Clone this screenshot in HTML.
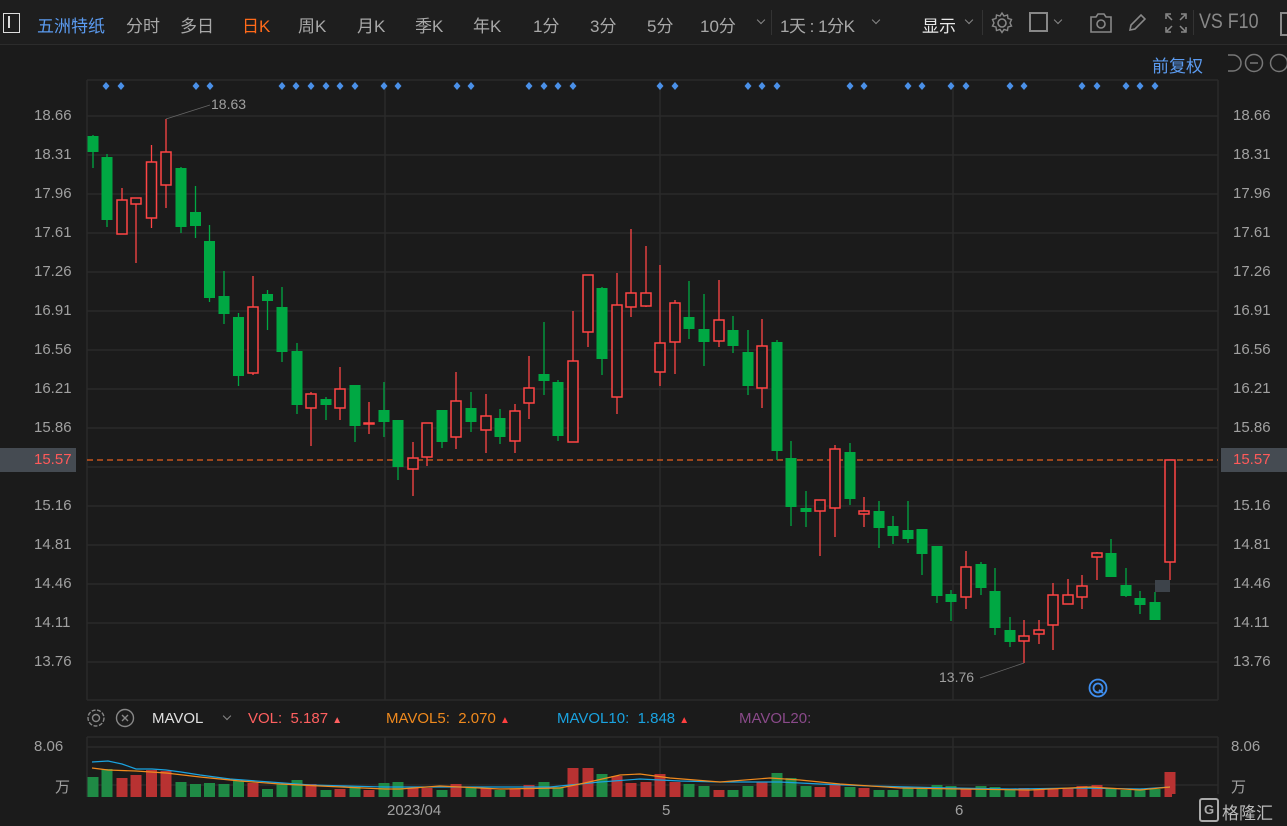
<!DOCTYPE html>
<html><head><meta charset="utf-8"><style>
body{margin:0;width:1287px;height:826px;background:#1b1b1b;overflow:hidden;font-family:"Liberation Sans","Noto Sans CJK SC",sans-serif;position:relative}
.tb{position:absolute;left:0;top:0;width:1287px;height:44px;background:#1e1e1e;border-bottom:1px solid #2c2c2c}
.tb span{position:absolute;top:12px;font-size:17px;color:#a8a8a8}
.tb i{position:absolute;top:17px;width:5px;height:5px;border-right:1.3px solid #888;border-bottom:1.3px solid #888;transform:rotate(45deg)}
.t{position:absolute;font-size:15px;color:#a0a0a0}
</style></head><body>
<div style="position:absolute;left:0;top:0;width:1287px;height:4px;background:#111"></div>
<div class="tb">
<div style="position:absolute;left:3px;top:13px;width:15px;height:18px;border:1px solid #ddd"></div><div style="position:absolute;left:8px;top:16px;width:2px;height:12px;background:#ddd"></div>
<span style="left:37px;color:#5b9bf0">五洲特纸</span>
<span style="left:126px">分时</span><span style="left:180px">多日</span>
<span style="left:242px;color:#ff6a1a">日K</span><span style="left:298px">周K</span><span style="left:357px">月K</span>
<span style="left:415px">季K</span><span style="left:473px">年K</span><span style="left:533px">1分</span>
<span style="left:590px">3分</span><span style="left:647px">5分</span><span style="left:700px">10分</span>
<i style="left:758px"></i>
<div style="position:absolute;left:771px;top:10px;width:1px;height:25px;background:#333"></div>
<span style="left:780px;letter-spacing:-0.5px">1天 : 1分K</span><i style="left:873px"></i>
<span style="left:922px;color:#e8e8e8">显示</span><i style="left:966px"></i>
<div style="position:absolute;left:982px;top:10px;width:1px;height:25px;background:#333"></div>
<svg style="position:absolute;left:990px;top:11px" width="24" height="24" viewBox="0 0 24 24"><circle cx="12" cy="12" r="4" fill="none" stroke="#888" stroke-width="1.6"/><path d="M12 2l2 3 3.5-1 .5 3.5 3.5 1-1.5 3.5 1.5 3-3.5 1-.5 3.5-3.5-1-2 3-2-3-3.5 1-.5-3.5-3.5-1 1.5-3-1.5-3.5 3.5-1 .5-3.5 3.5 1z" fill="none" stroke="#888" stroke-width="1.4"/></svg>
<div style="position:absolute;left:1029px;top:12px;width:19px;height:20px;border:2px solid #888;box-sizing:border-box"></div>
<i style="left:1055px"></i>
<svg style="position:absolute;left:1089px;top:12px" width="24" height="22" viewBox="0 0 24 22"><path d="M2 5h5l2-3h6l2 3h5v15H2z" fill="none" stroke="#888" stroke-width="1.6"/><circle cx="12" cy="12" r="4" fill="none" stroke="#888" stroke-width="1.6"/></svg>
<svg style="position:absolute;left:1126px;top:12px" width="22" height="22" viewBox="0 0 22 22"><path d="M4 18l1-5L15 3l4 4L9 17z" fill="none" stroke="#888" stroke-width="1.6"/></svg>
<svg style="position:absolute;left:1164px;top:12px" width="24" height="22" viewBox="0 0 24 22"><path d="M2 7V2h5M17 2h5v5M22 15v5h-5M7 20H2v-5M3 3l5 5M21 3l-5 5M21 19l-5-5M3 19l5-5" fill="none" stroke="#888" stroke-width="1.5"/></svg>
<div style="position:absolute;left:1193px;top:10px;width:1px;height:25px;background:#333"></div>
<span style="left:1199px;font-size:21px;top:10px;color:#888;transform:scaleX(0.85);transform-origin:left">VS F10</span>
<div style="position:absolute;left:1280px;top:12px;width:10px;height:20px;border:2px solid #888"></div>
</div>
<span class="t" style="left:1152px;top:52px;font-size:17px;color:#5b9bf0">前复权</span>
<svg style="position:absolute;left:1224px;top:51px" width="63" height="24" viewBox="0 0 63 24"><path d="M4 4h5a8 8 0 0 1 0 16H4" fill="none" stroke="#777" stroke-width="1.5"/><circle cx="30" cy="12" r="8.5" fill="none" stroke="#777" stroke-width="1.5"/><path d="M26 12h8" stroke="#777" stroke-width="1.5"/><circle cx="55" cy="12" r="8.5" fill="none" stroke="#777" stroke-width="1.5"/></svg>
<svg style="position:absolute;left:0;top:0" width="1287" height="826">
<g stroke="#2a2a2a" stroke-width="1.5">
<line x1="87" y1="80" x2="1218" y2="80"/>
<line x1="87" y1="80" x2="87" y2="700"/><line x1="1218" y1="80" x2="1218" y2="700"/>
<line x1="385" y1="80" x2="385" y2="700"/><line x1="660" y1="80" x2="660" y2="700"/><line x1="953" y1="80" x2="953" y2="700"/>
<line x1="87" y1="116" x2="1218" y2="116"/><line x1="87" y1="155" x2="1218" y2="155"/><line x1="87" y1="194" x2="1218" y2="194"/><line x1="87" y1="233" x2="1218" y2="233"/><line x1="87" y1="272" x2="1218" y2="272"/><line x1="87" y1="311" x2="1218" y2="311"/><line x1="87" y1="350" x2="1218" y2="350"/><line x1="87" y1="389" x2="1218" y2="389"/><line x1="87" y1="428" x2="1218" y2="428"/><line x1="87" y1="467" x2="1218" y2="467"/><line x1="87" y1="506" x2="1218" y2="506"/><line x1="87" y1="545" x2="1218" y2="545"/><line x1="87" y1="584" x2="1218" y2="584"/><line x1="87" y1="623" x2="1218" y2="623"/><line x1="87" y1="662" x2="1218" y2="662"/>
<line x1="87" y1="700" x2="1218" y2="700"/>
<line x1="87" y1="737" x2="1218" y2="737"/><line x1="87" y1="747" x2="1218" y2="747"/><line x1="87" y1="785" x2="1218" y2="785"/>
<line x1="87" y1="737" x2="87" y2="797"/><line x1="1218" y1="737" x2="1218" y2="797"/><line x1="385" y1="737" x2="385" y2="797"/><line x1="660" y1="737" x2="660" y2="797"/><line x1="953" y1="737" x2="953" y2="797"/>
</g>
<g fill="#4a90e8" id="dia"></g>
<line x1="87" y1="460" x2="1218" y2="460" stroke="#e8601c" stroke-width="1.3" stroke-dasharray="6,4"/>
<g id="c"></g>
<g id="v"></g>
<polyline fill="none" stroke="#1aa3e0" stroke-width="1.2" points="92,762 108,761 122,764 136,769 152,769 166,770 181,772 200,775 230,779 270,782 310,785 385,787 460,787 520,787 550,787 600,782 640,779 680,781 720,782 780,782 820,784 870,786 950,788 1010,789 1080,788 1140,789 1170,787"/>
<polyline fill="none" stroke="#f08a1e" stroke-width="1.2" points="92,768 108,770 136,771 166,773 200,777 240,781 280,784 320,786 385,789 400,789 440,786 500,789 560,788 580,784 620,775 640,774 670,778 720,782 770,778 800,780 840,784 900,788 960,789 1030,790 1090,787 1140,790 1170,787"/>
<path d="M166 119L210 105" stroke="#666" stroke-width="0.8"/>
<path d="M1024 663L980 678" stroke="#666" stroke-width="0.8"/>
<circle cx="1098" cy="688" r="8.5" fill="none" stroke="#3f8ff0" stroke-width="1.8"/><circle cx="1098" cy="688" r="4.5" fill="none" stroke="#3f8ff0" stroke-width="1.8"/><path d="M1099 690l4 3" stroke="#3f8ff0" stroke-width="1.8"/>
<rect x="1155" y="580" width="15" height="12" fill="#3d434a"/>
</svg>
<span class="t" style="left:211px;top:96px;font-size:14px">18.63</span>
<span class="t" style="left:939px;top:669px;font-size:14px">13.76</span>
<div id="lab"></div>
<div style="position:absolute;left:0;top:448px;width:76px;height:24px;background:#454b52"></div>
<div style="position:absolute;left:1221px;top:448px;width:66px;height:24px;background:#454b52"></div>
<span class="t" style="left:34px;top:451px;color:#ff5a5a">15.57</span>
<span class="t" style="left:1233px;top:451px;color:#ff5a5a">15.57</span>
<svg style="position:absolute;left:86px;top:707px" width="50" height="22" viewBox="0 0 50 22"><circle cx="10" cy="11" r="3.5" fill="none" stroke="#888" stroke-width="1.4"/><circle cx="10" cy="11" r="8" fill="none" stroke="#888" stroke-width="1.4" stroke-dasharray="4,1.5"/><circle cx="39" cy="11" r="8.5" fill="none" stroke="#888" stroke-width="1.4"/><path d="M36 8l6 6M42 8l-6 6" stroke="#888" stroke-width="1.4"/></svg>
<span class="t" style="left:152px;top:710px;color:#e0e0e0">MAVOL</span>
<div style="position:absolute;left:224px;top:713px;width:5px;height:5px;border-right:1.3px solid #888;border-bottom:1.3px solid #888;transform:rotate(45deg)"></div>
<span class="t" style="left:248px;top:710px;color:#ff6060">VOL:&nbsp;&nbsp;5.187 <span style="font-size:10px">▲</span></span>
<span class="t" style="left:386px;top:710px;color:#f08a1e">MAVOL5:&nbsp;&nbsp;2.070 <span style="font-size:10px;color:#ff4040">▲</span></span>
<span class="t" style="left:557px;top:710px;color:#1aa3e0">MAVOL10:&nbsp;&nbsp;1.848 <span style="font-size:10px;color:#ff4040">▲</span></span>
<span class="t" style="left:739px;top:710px;color:#8a4a8a">MAVOL20:</span>
<span class="t" style="left:34px;top:738px">8.06</span><span class="t" style="left:1231px;top:738px">8.06</span>
<span class="t" style="left:55px;top:776px">万</span><span class="t" style="left:1231px;top:776px">万</span>
<span class="t" style="left:387px;top:802px">2023/04</span><span class="t" style="left:662px;top:802px">5</span><span class="t" style="left:955px;top:802px">6</span>
<div style="position:absolute;left:1172px;top:794px;width:115px;height:32px;background:#1b1b1b"></div>
<div style="position:absolute;left:1199px;top:798px;width:16px;height:20px;border:2px solid #aaa;border-radius:3px;color:#aaa;font-size:13px;line-height:20px;text-align:center;font-weight:bold">G</div>
<span class="t" style="left:1222px;top:799px;font-size:17px;color:#bbb">格隆汇</span>
<script>
var C=[[93,135,136,152,168,'g'],[107,154,157,220,227,'g'],[122,188,200,234,234,'r'],[136,198,198,204,263,'r'],[151.5,145,162,218,228,'r'],[166,119,152,185,208,'r'],[181,167,168,227,233,'g'],[195.5,186,212,226,238,'g'],[209.5,225,241,298,302,'g'],[224,271,296,314,324,'g'],[238.5,313,317,376,386,'g'],[253,276,307,373,375,'r'],[267.5,290,294,301,330,'g'],[282,287,307,352,362,'g'],[297,343,351,405,414,'g'],[311,392,394,408,446,'r'],[326,397,399,405,420,'g'],[340,367,389,408,420,'r'],[355,385,385,426,442,'g'],[369,402,423,424,434,'r'],[384,382,410,422,437,'g'],[398,420,420,467,480,'g'],[413,442,458,469,496,'r'],[427,423,423,457,466,'r'],[442,410,410,442,448,'g'],[456,372,401,437,449,'r'],[471,392,408,422,432,'g'],[486,394,416,430,453,'r'],[500,409,418,437,444,'g'],[515,404,411,441,453,'r'],[529,356,388,403,419,'r'],[544,322,374,381,395,'g'],[558,380,382,436,441,'g'],[573,311,361,442,442,'r'],[588,275,275,332,347,'r'],[602,287,288,359,375,'g'],[617,273,305,397,414,'r'],[631,229,293,307,317,'r'],[646,246,293,306,307,'r'],[660,265,343,372,386,'r'],[675,300,303,342,374,'r'],[689,281,317,329,339,'g'],[704,294,329,342,366,'g'],[719,280,320,341,347,'r'],[733,316,330,346,353,'g'],[748,330,352,386,395,'g'],[762,319,346,388,408,'r'],[777,340,342,451,460,'g'],[791,441,458,507,526,'g'],[806,491,508,512,527,'g'],[820,500,500,511,556,'r'],[835,445,449,508,537,'r'],[850,443,452,499,505,'g'],[864,497,511,514,527,'r'],[879,501,511,528,548,'g'],[893,516,526,536,544,'g'],[908,501,530,539,543,'g'],[922,529,529,554,575,'g'],[937,546,546,596,603,'g'],[951,590,594,602,621,'g'],[966,551,567,597,609,'r'],[981,562,564,588,595,'g'],[995,568,591,628,635,'g'],[1010,617,630,642,647,'g'],[1024,620,636,641,663,'r'],[1039,620,630,634,644,'r'],[1053,583,595,625,650,'r'],[1068,579,595,604,604,'r'],[1082,575,586,597,609,'r'],[1097,552,553,557,580,'r'],[1111,539,553,577,577,'g'],[1126,568,585,596,597,'g'],[1140,591,598,605,614,'g'],[1155,592,602,620,620,'g'],[1170,460,460,562,580,'r']];
var V=[777,769,778,775,770,771,782,784,783,784,781,783,789,784,780,784,790,789,786,790,783,782,788,788,790,784,787,788,790,789,785,782,787,768,768,774,776,783,782,774,782,784,786,790,790,786,782,773,778,786,787,784,787,788,790,790,788,787,785,786,788,786,787,790,788,789,788,788,786,785,788,790,790,789,772];
var s='',v='',d='';
C.forEach(function(c,i){var x=c[0],g=c[5]=='g',col=g?'#00a843':'#ff4545';
s+='<line x1="'+x+'" y1="'+c[1]+'" x2="'+x+'" y2="'+c[4]+'" stroke="'+col+'" stroke-width="1.3"/>';
var h=Math.max(c[3]-c[2],1);
if(g)s+='<rect x="'+(x-5.5)+'" y="'+c[2]+'" width="11" height="'+h+'" fill="'+col+'"/>';
else s+='<rect x="'+(x-5)+'" y="'+c[2]+'" width="10" height="'+h+'" fill="#1b1b1b" stroke="'+col+'" stroke-width="1.5"/>';
v+='<rect x="'+(x-5.5)+'" y="'+V[i]+'" width="11" height="'+(797-V[i])+'" fill="'+(g?'#1f8a45':'#b83232')+'"/>';});
[106,121,196,210,282,296,311,326,340,355,384,398,457,471,529,544,558,573,660,675,748,762,777,850,864,908,922,951,966,1010,1024,1082,1097,1126,1140,1155].forEach(function(x){d+='<path d="M'+x+' 82l3.5 4-3.5 4-3.5-4z"/>';});
document.getElementById('c').innerHTML=s;document.getElementById('v').innerHTML=v;document.getElementById('dia').innerHTML=d;
var L='';['18.66','18.31','17.96','17.61','17.26','16.91','16.56','16.21','15.86','','15.16','14.81','14.46','14.11','13.76'].forEach(function(t,i){if(!t)return;var y=116+39*i-9;L+='<span class="t" style="left:34px;top:'+y+'px">'+t+'</span><span class="t" style="left:1233px;top:'+y+'px">'+t+'</span>';});
document.getElementById('lab').innerHTML=L;
</script>
</body></html>
